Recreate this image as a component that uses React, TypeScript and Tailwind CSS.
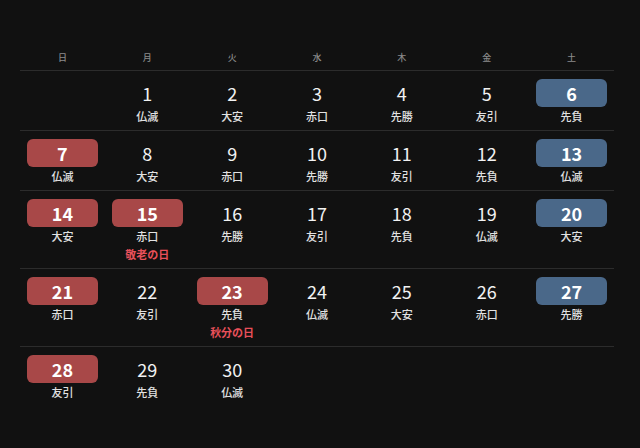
import React from "react";

type Cell = { d: number; r: string; kind?: "red" | "blue"; h?: string } | null;

const rows: Cell[][] = [
  [null, { d: 1, r: "仏滅" }, { d: 2, r: "大安" }, { d: 3, r: "赤口" }, { d: 4, r: "先勝" }, { d: 5, r: "友引" }, { d: 6, r: "先負", kind: "blue" }],
  [{ d: 7, r: "仏滅", kind: "red" }, { d: 8, r: "大安" }, { d: 9, r: "赤口" }, { d: 10, r: "先勝" }, { d: 11, r: "友引" }, { d: 12, r: "先負" }, { d: 13, r: "仏滅", kind: "blue" }],
  [{ d: 14, r: "大安", kind: "red" }, { d: 15, r: "赤口", kind: "red", h: "敬老の日" }, { d: 16, r: "先勝" }, { d: 17, r: "友引" }, { d: 18, r: "先負" }, { d: 19, r: "仏滅" }, { d: 20, r: "大安", kind: "blue" }],
  [{ d: 21, r: "赤口", kind: "red" }, { d: 22, r: "友引" }, { d: 23, r: "先負", kind: "red", h: "秋分の日" }, { d: 24, r: "仏滅" }, { d: 25, r: "大安" }, { d: 26, r: "赤口" }, { d: 27, r: "先勝", kind: "blue" }],
  [{ d: 28, r: "友引", kind: "red" }, { d: 29, r: "先負" }, { d: 30, r: "仏滅" }, null, null, null, null],
];

const heads = ["日", "月", "火", "水", "木", "金", "土"];

export default function App() {
  return (
    <div
      className="w-[640px] h-[448px] bg-[#111111] text-white pl-5 pt-[45px]"
      style={{ fontFamily: '"Noto Sans CJK JP", "Noto Sans", sans-serif' }}
    >
      <div className="w-[594px]">
        <div className="grid grid-cols-7 h-[26px] border-b border-[#2c2c2c]">
          {heads.map((h) => (
            <div key={h} className="flex items-center justify-center text-[9px] text-[#8a8a8a] font-medium">
              {h}
            </div>
          ))}
        </div>
        {rows.map((row, i) => (
          <div
            key={i}
            className={`grid grid-cols-7 pt-2 pb-[6px] ${i < rows.length - 1 ? "border-b border-[#2c2c2c]" : ""}`}
          >
            {row.map((c, j) => (
              <div key={j} className="flex flex-col items-center px-[7px]">
                {c && (
                  <>
                    <div
                      className={`w-full h-[28px] rounded-[6px] flex items-center justify-center text-[18px] leading-none ${
                        c.kind === "red"
                          ? "bg-[#a84848] font-bold"
                          : c.kind === "blue"
                          ? "bg-[#4a6889] font-bold"
                          : "text-[#f2f2f2]"
                      }`}
                    >
                      {c.d}
                    </div>
                    <div className="mt-[1px] h-[16px] leading-[16px] text-[11px] text-[#e2e2e2] font-medium">{c.r}</div>
                    {c.h && (
                      <div className="mt-[2px] h-[16px] leading-[16px] text-[11px] text-[#e8505a] font-bold">{c.h}</div>
                    )}
                  </>
                )}
              </div>
            ))}
          </div>
        ))}
      </div>
    </div>
  );
}
